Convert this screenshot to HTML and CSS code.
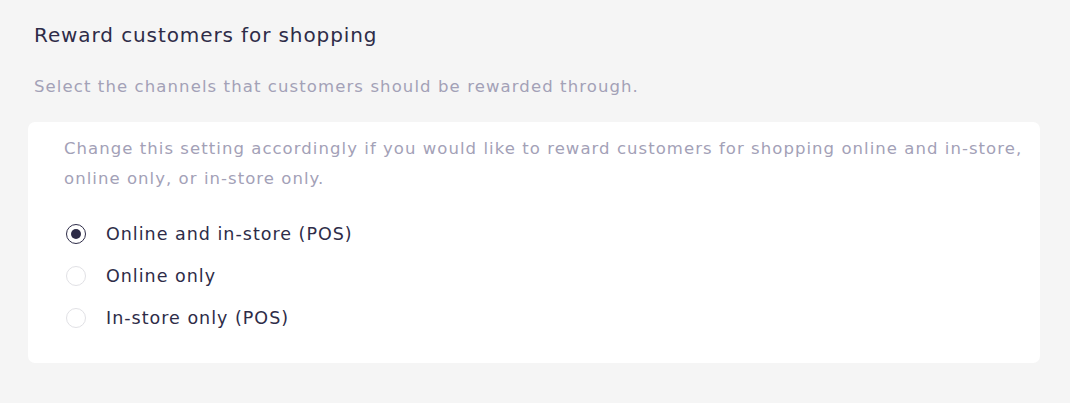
FILE: index.html
```html
<!DOCTYPE html>
<html lang="en">
<head>
  <meta charset="UTF-8">
  <title>Reward customers for shopping</title>
  <link rel="stylesheet" href="styles.css">
</head>
<body>

<section class="setting">
  <h2 class="setting-title">Reward customers for shopping</h2>
  <p class="setting-desc">Select the channels that customers should be rewarded through.</p>

  <div class="card">
    <p class="card-note">Change this setting accordingly if you would like to reward customers for shopping online and in-store, online only, or in-store only.</p>

    <div class="radio-list">
      <label class="radio">
        <input type="radio" name="channel" checked>
        <span class="radio-dot"></span>
        <span class="radio-label">Online and in-store (POS)</span>
      </label>
      <label class="radio">
        <input type="radio" name="channel">
        <span class="radio-dot"></span>
        <span class="radio-label">Online only</span>
      </label>
      <label class="radio">
        <input type="radio" name="channel">
        <span class="radio-dot"></span>
        <span class="radio-label">In-store only (POS)</span>
      </label>
    </div>
  </div>
</section>

</body>
</html>
```

FILE: styles.css
```css
body {
  margin: 0;
  background: #f5f5f5;
  font-family: "DejaVu Sans", "Noto Sans", sans-serif;
  color: #2e2c48;
}
.setting {
  padding: 20px 30px 0 28px;
}
.setting-title {
  margin: 0 0 0 6px;
  font-size: 20px;
  font-weight: normal;
  letter-spacing: 0.9px;
  line-height: 30px;
}
.setting-desc {
  margin: 24px 0 0 6px;
  font-size: 16.5px;
  letter-spacing: 1.1px;
  line-height: 26px;
  color: #a3a1b7;
}
.card {
  margin-top: 22px;
  background: #fff;
  border-radius: 7px;
  padding: 12px 10px 34px 36px;
  width: 966px;
}
.card-note {
  margin: 0;
  font-size: 16.5px;
  letter-spacing: 1.05px;
  line-height: 30px;
  color: #a3a1b7;
}
.radio-list {
  margin-top: 29px;
  display: flex;
  flex-direction: column;
  gap: 20px;
}
.radio {
  display: flex;
  align-items: center;
  gap: 20px;
  height: 22px;
}
.radio input {
  display: none;
}
.radio-dot {
  width: 20px;
  height: 20px;
  margin-left: 2px;
  box-sizing: border-box;
  border: 1.5px solid #e1e1e5;
  border-radius: 50%;
  display: flex;
  align-items: center;
  justify-content: center;
}
.radio input:checked + .radio-dot {
  border-color: #2e2c48;
}
.radio input:checked + .radio-dot::after {
  content: "";
  width: 10px;
  height: 10px;
  border-radius: 50%;
  background: #2e2c48;
}
.radio-label {
  font-size: 17.5px;
  letter-spacing: 1px;
  line-height: 22px;
}
```
